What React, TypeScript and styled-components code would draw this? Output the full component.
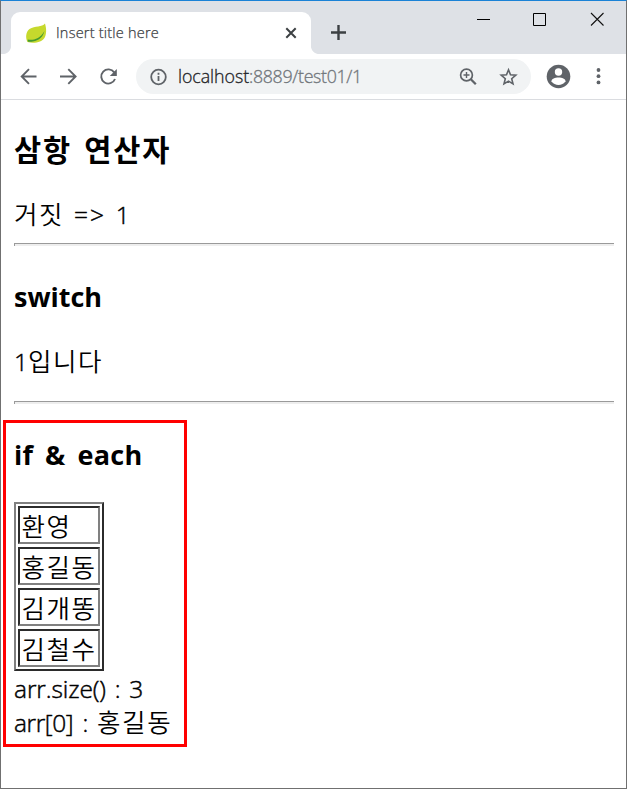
import React from "react";
import styled, { createGlobalStyle } from "styled-components";

const Global = createGlobalStyle`
  * { box-sizing: border-box; }
  html, body { margin: 0; padding: 0; background: #fff; overflow: hidden; }
`;

const Window = styled.div`
  position: relative;
  width: 627px;
  height: 789px;
  display: flex;
  flex-direction: column;
  background: #fff;
  border: 1px solid #707070;
  border-top-color: #1a82d6;
  color: #000;
  font-family: "Open Sans", "Noto Sans CJK KR", sans-serif;
`;

const TabStrip = styled.div`
  display: flex;
  height: 53px;
  padding: 11px 0 0 2px;
  background: #dee1e6;
`;

const TabFlare = styled.div<{ $side: "left" | "right" }>`
  width: 8px;
  height: 42px;
  background: radial-gradient(
    circle at ${(p) => (p.$side === "left" ? "0 0" : "8px 0")},
    #dee1e6 7.6px,
    #fff 8.4px
  ) no-repeat 0 34px / 8px 8px;
`;

const Tab = styled.div`
  width: 300px;
  height: 42px;
  display: flex;
  align-items: center;
  padding: 0 13px 0 14px;
  border-radius: 9px 9px 0 0;
  background: #fff;
`;

const TabTitle = styled.span`
  flex: 1;
  margin-left: 9px;
  font-size: 14.5px;
  font-weight: 350;
  -webkit-text-stroke: 0.25px;
  line-height: 20px;
  letter-spacing: 0.22px;
  color: #3c4043;
  white-space: nowrap;
`;

const NewTab = styled.div`
  padding: 12px 0 0 11px;
`;

const WindowButtons = styled.div`
  display: flex;
  gap: 42px;
  margin-left: auto;
  padding-right: 22px;

  & > :last-child {
    margin-left: 2px;
  }
`;

const Toolbar = styled.div`
  display: flex;
  align-items: center;
  height: 46px;
  padding: 0 16px 0 18px;
  border-bottom: 1px solid #dadce0;
`;

const NavButtons = styled.div`
  display: flex;
  gap: 22px;
  width: 117px;
`;

const AddressBar = styled.div`
  display: flex;
  align-items: center;
  width: 395px;
  height: 35px;
  padding: 0 13px 0 13px;
  border-radius: 18px;
  background: #f1f3f4;
`;

const Url = styled.span`
  flex: 1;
  margin: -1px 0 0 11px;
  font-size: 17.8px;
  font-weight: 350;
  -webkit-text-stroke: 0.3px;
  line-height: 24px;
  letter-spacing: -0.32px;
  color: #70757a;
  white-space: nowrap;
`;

const Host = styled.span`
  letter-spacing: -0.05px;
  color: #202124;
`;

const AddressActions = styled.div`
  display: flex;
  gap: 20px;
`;

const ToolbarActions = styled.div`
  display: flex;
  align-items: center;
  gap: 17px;
  margin-left: 14px;
`;

const Page = styled.main`
  display: flex;
  flex-direction: column;
  padding: 31px 12px 0 13px;
`;

const Heading = styled.h2<{ $size: number; $spacing: number; $word: number }>`
  margin: 0;
  height: 38px;
  font-size: ${(p) => p.$size}px;
  line-height: 38px;
  font-weight: 700;
  letter-spacing: ${(p) => p.$spacing}px;
  word-spacing: ${(p) => p.$word}px;
  white-space: nowrap;
`;

const Line = styled.div<{ $top?: number; $spacing?: number; $word?: number }>`
  margin-top: ${(p) => p.$top ?? 0}px;
  height: 33px;
  font-size: 24.5px;
  font-weight: 350;
  -webkit-text-stroke: 0.45px;
  line-height: 33px;
  letter-spacing: ${(p) => p.$spacing ?? 0}px;
  word-spacing: ${(p) => p.$word ?? 0}px;
  white-space: pre;
`;

const Korean = styled.span`
  font-family: "Noto Sans CJK KR", sans-serif;
  font-size: 25.5px;
  font-weight: 350;
  -webkit-text-stroke: 0;
  letter-spacing: 1.6px;
`;

const Rule = styled.hr<{ $top: number; $bottom: number }>`
  width: 600px;
  height: 3px;
  margin: ${(p) => p.$top}px 0 ${(p) => p.$bottom}px;
  border: 0;
  border-top: 1px solid #9a9a9a;
  border-left: 1px solid #9a9a9a;
  background: #eee;
`;

const NameTable = styled.div`
  display: grid;
  grid-auto-rows: 38px;
  gap: 3px;
  width: 90px;
  height: 169px;
  margin-top: 28px;
  padding: 2px;
  border: 2px solid;
  border-color: #808080 #2b2b2b #2b2b2b #808080;
`;

const NameCell = styled.div`
  padding-left: 1.5px;
  border: 2px solid;
  border-color: #2b2b2b #808080 #808080 #2b2b2b;
  font-size: 24px;
  line-height: 34px;
  white-space: nowrap;
`;

const Highlight = styled.div`
  position: absolute;
  left: 2px;
  top: 419px;
  width: 184px;
  height: 327px;
  border: 3px solid #f00;
`;

const Leaf = () => (
  <svg width="22" height="22" viewBox="0 0 22 22">
    <path d="M20 1.5C17 5.5 10 3.5 4.5 7C.5 10 .5 16 2.5 20C8 21.5 17 21 20 15C22 10 21 5 20 1.5Z" fill="#c6d92d" />
    <path d="M2.8 17.6C8 18.6 15 17 19.5 9C18 15 14 18.3 9 19.2C6 19.8 3.5 20 2.8 19.4Z" fill="#459b30" />
  </svg>
);

const Stroke = styled.svg<{ $weight?: number; $color?: string }>`
  display: block;
  flex: none;
  fill: none;
  stroke: ${(p) => p.$color ?? "#5f6368"};
  stroke-width: ${(p) => p.$weight ?? 2};
`;

const names = ["환영", "홍길동", "김개똥", "김철수"];

export default function App() {
  return (
    <>
      <Global />
      <Window>
        <TabStrip>
          <TabFlare $side="left" />
          <Tab>
            <Leaf />
            <TabTitle>Insert title here</TabTitle>
            <Stroke width="14" height="14" $weight={2} $color="#3c4043">
              <path d="M2.3 2.3l9.4 9.4M11.7 2.3l-9.4 9.4" />
            </Stroke>
          </Tab>
          <TabFlare $side="right" />
          <NewTab>
            <Stroke width="16" height="16" $weight={2.4} $color="#3c4043">
              <path d="M8.5 1v15M1 8.5h15" />
            </Stroke>
          </NewTab>
          <WindowButtons>
            <Stroke width="14" height="14" $weight={1} $color="#000">
              <path d="M1 7.5h13" />
            </Stroke>
            <Stroke width="14" height="14" $weight={1} $color="#000">
              <path d="M1.5 1.5h12v12h-12z" />
            </Stroke>
            <Stroke width="14" height="14" $weight={1.1} $color="#111">
              <path d="M1 1l12.5 12.5M13.5 1L1 13.5" />
            </Stroke>
          </WindowButtons>
        </TabStrip>
        <Toolbar>
          <NavButtons>
            <Stroke width="18" height="18" $weight={1.9}>
              <path d="M17.5 8.5H3M10 1.2L2.7 8.5l7.3 7.4" />
            </Stroke>
            <Stroke width="18" height="18" $weight={1.9}>
              <path d="M1 8.5h14.8M9.3 1.2L16.6 8.5l-7.3 7.4" />
            </Stroke>
            <Stroke width="18" height="18" $weight={1.9}>
              <path d="M15.2 4.4A7.1 7.1 0 1 0 16 11" />
              <path d="M17.8 1v7h-7z" fill="#5f6368" stroke="none" />
            </Stroke>
          </NavButtons>
          <AddressBar>
            <Stroke width="18" height="18" $weight={1.8}>
              <circle cx="9.5" cy="9" r="7.3" />
              <path d="M9.5 8v5M9.5 4.8v1.9" />
            </Stroke>
            <Url>
              <Host>localhost</Host>:8889/test01/1
            </Url>
            <AddressActions>
              <Stroke width="20" height="20" $weight={1.7}>
                <circle cx="8.5" cy="8" r="5.9" />
                <path d="M8.5 5v6M5.5 8h6" strokeWidth="1.4" />
                <path d="M12.8 12.3l5 5" strokeWidth="2.3" />
              </Stroke>
              <Stroke width="20" height="20" $weight={1.6}>
                <path d="M10.5 2.8l2 5 5.3.4-4.1 3.5 1.3 5.2-4.5-2.8L6 16.9l1.3-5.2-4.1-3.5 5.3-.4z" />
              </Stroke>
            </AddressActions>
          </AddressBar>
          <ToolbarActions>
            <svg width="26" height="26" viewBox="0 0 26 26">
              <circle cx="13.5" cy="12.5" r="11.8" fill="#5f6368" />
              <circle cx="13.5" cy="8" r="3.7" fill="#fff" />
              <path d="M6.5 17.3c0-5 14-5 14 0-3.2 5-10.8 5-14 0z" fill="#fff" />
            </svg>
            <svg width="22" height="20" viewBox="0 0 22 20" fill="#5f6368">
              <circle cx="10.5" cy="3" r="1.9" />
              <circle cx="10.5" cy="9.2" r="1.9" />
              <circle cx="10.5" cy="15.4" r="1.9" />
            </svg>
          </ToolbarActions>
        </Toolbar>
        <Page>
          <Heading $size={29.5} $spacing={1.9} $word={2.5}>삼항 연산자</Heading>
          <Line $top={27} $spacing={2} $word={1.5}>
            <Korean>거짓</Korean> =&gt; 1
          </Line>
          <Rule $top={14} $bottom={32} />
          <Heading $size={27} $spacing={0} $word={0}>switch</Heading>
          <Line $top={27}>
            1<Korean>입니다</Korean>
          </Line>
          <Rule $top={25} $bottom={32} />
          <Heading $size={27} $spacing={0.3} $word={4.5}>if &amp; each</Heading>
          <NameTable>
            {names.map((name) => (
              <NameCell key={name}>
                <Korean>{name}</Korean>
              </NameCell>
            ))}
          </NameTable>
          <Line $top={1} $spacing={-0.1} $word={2.5}>arr.size() : 3</Line>
          <Line $top={-1} $spacing={-0.4} $word={3.2}>
            arr[0] : <Korean>홍길동</Korean>
          </Line>
        </Page>
        <Highlight />
      </Window>
    </>
  );
}
